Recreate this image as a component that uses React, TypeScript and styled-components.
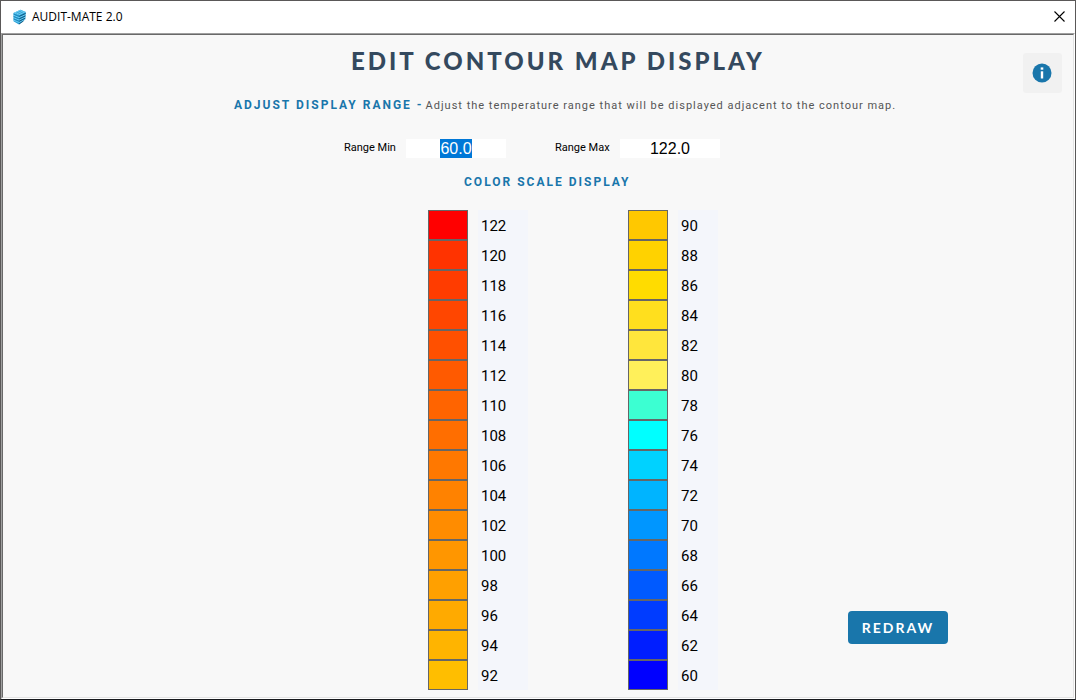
import React, { useEffect, useRef } from "react";
import styled, { createGlobalStyle } from "styled-components";

const GlobalStyle = createGlobalStyle`
  *, *::before, *::after { box-sizing: border-box; }
  body { margin: 0; background: #ffffff; }
`;

const Window = styled.div`
  display: flex;
  flex-direction: column;
  min-height: 100vh;
  border: 1px solid #5a5858;
  border-bottom-color: #16181c;
  background: #ffffff;
  color: #000000;
  font-family: Roboto, sans-serif;
`;

const TitleBar = styled.header`
  display: flex;
  align-items: center;
  height: 32px;
  padding: 0 8px 0 11px;
  gap: 4px;
`;

const WindowTitle = styled.span`
  flex: 1;
  font: 12px/16px "Open Sans", sans-serif;
`;

const CloseButton = styled.button`
  display: flex;
  padding: 2px 2px 4px;
  border: 0;
  background: none;
`;

const Frame = styled.div`
  flex: 1;
  display: flex;
  border: 1px solid;
  border-color: #a0a0a0 #ffffff #ffffff #a0a0a0;
`;

const Panel = styled.main`
  flex: 1;
  display: grid;
  grid-template-columns: minmax(0, 231fr) 714px minmax(50px, 125fr);
  border: 1px solid;
  border-color: #696969 #e3e3e3 #e3e3e3 #696969;
  background: #f8f8f8;
`;

const Content = styled.div`
  grid-column: 2;
  display: flex;
  flex-direction: column;
  padding: 10px 0 7px;
`;

const Heading = styled.h1`
  margin: 0;
  padding-left: 117px;
  color: #34495e;
  font: 900 24px/32px Lato, sans-serif;
  letter-spacing: 3px;
  white-space: nowrap;
`;

const Intro = styled.div`
  display: flex;
  align-items: baseline;
  gap: 2px;
  margin: 20px 0 0;
  color: #555555;
  font-size: 11px;
  line-height: 16px;
  letter-spacing: 1px;
  white-space: nowrap;
`;

const SectionTitle = styled.h2`
  margin: 0;
  color: #1976ab;
  font: 700 12px/16px Roboto, sans-serif;
  letter-spacing: 2px;
  white-space: nowrap;
`;

const ScaleTitle = styled(SectionTitle)`
  margin-top: 16px;
  padding-left: 230px;
`;

const RangeRow = styled.div`
  display: flex;
  align-items: center;
  gap: 49px;
  margin-top: 24px;
  padding-left: 110px;
`;

const Field = styled.div`
  display: flex;
  align-items: center;
  gap: 10px;
`;

const FieldLabel = styled.label<{ $width: number }>`
  width: ${(p) => p.$width}px;
  font: 11px/20px Roboto, sans-serif;
  white-space: nowrap;
`;

const RangeInput = styled.input`
  width: 100px;
  height: 19px;
  padding: 0;
  border: 0;
  outline: 0;
  background: #ffffff;
  color: #000000;
  font: 16px/19px "Liberation Sans", sans-serif;
  text-align: center;

  &::selection {
    background: #0078d7;
    color: #ffffff;
  }
`;

const ScaleArea = styled.div`
  display: flex;
  margin-top: 20px;
  padding-left: 194px;
`;

const ScaleList = styled.ul<{ $width: number }>`
  width: ${(p) => p.$width}px;
  margin: 0;
  padding: 0;
  list-style: none;
`;

const ScaleItem = styled.li`
  display: flex;
  gap: 10px;
  height: 30px;
`;

const Swatch = styled.span<{ $color: string }>`
  width: 40px;
  border: 1px solid #666666;
  background: ${(p) => p.$color};
`;

const ScaleValue = styled.span<{ $width: number }>`
  width: ${(p) => p.$width}px;
  padding-left: 3px;
  background: #f4f6fb;
  font-size: 15px;
  line-height: 32px;
`;

const RedrawButton = styled.button`
  align-self: flex-end;
  width: 100px;
  height: 33px;
  margin: 0 0 46px auto;
  padding: 0;
  border: 0;
  border-radius: 4px;
  background: #1976ab;
  color: #ffffff;
  font: 700 14px/33px Lato, sans-serif;
  letter-spacing: 2px;
`;

const InfoButton = styled.button`
  justify-self: end;
  display: flex;
  align-items: center;
  justify-content: center;
  width: 39px;
  height: 40px;
  margin: 18px 11px 0 0;
  padding: 0 1px 1px 0;
  border: 0;
  border-radius: 3px;
  background: #f1f1f1;
`;

type Step = [value: number, color: string];

const upperScale: Step[] = [
  [122, "#ff0000"],
  [120, "#ff3300"],
  [118, "#ff3c00"],
  [116, "#ff4600"],
  [114, "#ff5000"],
  [112, "#ff5a00"],
  [110, "#ff6400"],
  [108, "#ff6e00"],
  [106, "#ff7800"],
  [104, "#ff8200"],
  [102, "#ff8c00"],
  [100, "#ff9600"],
  [98, "#ffa000"],
  [96, "#ffaa00"],
  [94, "#ffb400"],
  [92, "#ffbe00"],
];

const lowerScale: Step[] = [
  [90, "#ffc800"],
  [88, "#ffd200"],
  [86, "#ffdc00"],
  [84, "#ffdf1e"],
  [82, "#ffe63c"],
  [80, "#fff05a"],
  [78, "#3cffd2"],
  [76, "#00ffff"],
  [74, "#00d2ff"],
  [72, "#00b4ff"],
  [70, "#0096ff"],
  [68, "#0078ff"],
  [66, "#005aff"],
  [64, "#003cff"],
  [62, "#001eff"],
  [60, "#0000ff"],
];

function Scale({ steps, listWidth, valueWidth }: { steps: Step[]; listWidth: number; valueWidth: number }) {
  return (
    <ScaleList $width={listWidth}>
      {steps.map(([value, color]) => (
        <ScaleItem key={value}>
          <Swatch $color={color} />
          <ScaleValue $width={valueWidth}>{value}</ScaleValue>
        </ScaleItem>
      ))}
    </ScaleList>
  );
}

function AppLogo() {
  return (
    <svg width="16" height="16" viewBox="0 0 16 16" aria-hidden="true">
      <path d="M1.500 4 8.500 .8 13.800 3 13.200 10.500 7 15.400 1.500 12.300Z" fill="#2a9fd6" />
      <path d="M1.500 4 8.500 .8 13.800 3 7.200 6.200Z" fill="#6fd0f4" />
      <path d="M4 4.300 9.500 1.800M6 5.200 11.500 2.700" stroke="#2191c8" strokeWidth=".7" />
      <path
        d="M1.500 6.200 7 8.500 13.600 5.500M1.500 8.600 7 11 13.400 8M1.500 11 7 13.400 13.200 10.200"
        fill="none"
        stroke="#74d3f6"
        strokeWidth=".9"
      />
      <path
        d="M7.200 7.400 13.700 4.400M7.200 9.900 13.500 6.900M7.200 12.300 13.300 9.200M7 15 11.500 12"
        fill="none"
        stroke="#0f4f74"
        strokeWidth=".9"
      />
      <path
        d="M1.500 5.100 7.200 7.400M1.500 7.500 7.200 9.900M1.500 9.900 7.200 12.300"
        fill="none"
        stroke="#1a7fb2"
        strokeWidth=".7"
      />
    </svg>
  );
}

export default function App() {
  const minInput = useRef<HTMLInputElement>(null);

  useEffect(() => {
    minInput.current?.focus();
    minInput.current?.select();
  }, []);

  return (
    <>
      <GlobalStyle />
      <Window>
        <TitleBar>
          <AppLogo />
          <WindowTitle>AUDIT-MATE 2.0</WindowTitle>
          <CloseButton type="button" aria-label="Close">
            <svg width="11" height="11" viewBox="0 0 11 11" aria-hidden="true">
              <path d="M.5.5 10.500 10.500M10.500.5.5 10.500" stroke="#000000" strokeWidth="1.100" />
            </svg>
          </CloseButton>
        </TitleBar>
        <Frame>
          <Panel>
            <Content>
              <Heading>EDIT CONTOUR MAP DISPLAY</Heading>
              <Intro>
                <SectionTitle>ADJUST DISPLAY RANGE -</SectionTitle>
                <span>Adjust the temperature range that will be displayed adjacent to the contour map.</span>
              </Intro>
              <RangeRow>
                <Field>
                  <FieldLabel htmlFor="range-min" $width={52}>Range Min</FieldLabel>
                  <RangeInput id="range-min" ref={minInput} defaultValue="60.0" />
                </Field>
                <Field>
                  <FieldLabel htmlFor="range-max" $width={55}>Range Max</FieldLabel>
                  <RangeInput id="range-max" defaultValue="122.0" />
                </Field>
              </RangeRow>
              <ScaleTitle>COLOR SCALE DISPLAY</ScaleTitle>
              <ScaleArea>
                <Scale steps={upperScale} listWidth={200} valueWidth={50} />
                <Scale steps={lowerScale} listWidth={90} valueWidth={40} />
                <RedrawButton type="button">REDRAW</RedrawButton>
              </ScaleArea>
            </Content>
            <InfoButton type="button" aria-label="Information">
              <svg width="20" height="20" viewBox="0 0 20 20" aria-hidden="true">
                <circle cx="10" cy="10" r="9.500" fill="#1976ab" />
                <path d="M8.700 4.400h2.600v2.300H8.700z" fill="#ffffff" />
                <path d="M8.800 8.300h2.400v7.200H8.800z" fill="#ffffff" />
              </svg>
            </InfoButton>
          </Panel>
        </Frame>
      </Window>
    </>
  );
}
